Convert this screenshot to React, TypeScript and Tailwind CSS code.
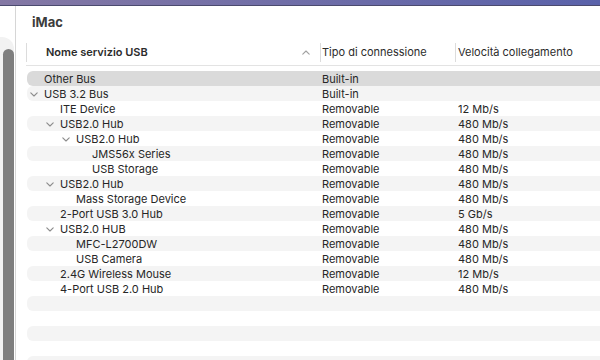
import React from 'react';

type Row = { name: string; level: number; open?: boolean; kind: string; speed: string };

const rows: Row[] = [
  { name: 'Other Bus', level: 0, kind: 'Built-in', speed: '' },
  { name: 'USB 3.2 Bus', level: 0, open: true, kind: 'Built-in', speed: '' },
  { name: 'ITE Device', level: 1, kind: 'Removable', speed: '12 Mb/s' },
  { name: 'USB2.0 Hub', level: 1, open: true, kind: 'Removable', speed: '480 Mb/s' },
  { name: 'USB2.0 Hub', level: 2, open: true, kind: 'Removable', speed: '480 Mb/s' },
  { name: 'JMS56x Series', level: 3, kind: 'Removable', speed: '480 Mb/s' },
  { name: 'USB Storage', level: 3, kind: 'Removable', speed: '480 Mb/s' },
  { name: 'USB2.0 Hub', level: 1, open: true, kind: 'Removable', speed: '480 Mb/s' },
  { name: 'Mass Storage Device', level: 2, kind: 'Removable', speed: '480 Mb/s' },
  { name: '2-Port USB 3.0 Hub', level: 1, kind: 'Removable', speed: '5 Gb/s' },
  { name: 'USB2.0 HUB', level: 1, open: true, kind: 'Removable', speed: '480 Mb/s' },
  { name: 'MFC-L2700DW', level: 2, kind: 'Removable', speed: '480 Mb/s' },
  { name: 'USB Camera', level: 2, kind: 'Removable', speed: '480 Mb/s' },
  { name: '2.4G Wireless Mouse', level: 1, kind: 'Removable', speed: '12 Mb/s' },
  { name: '4-Port USB 2.0 Hub', level: 1, kind: 'Removable', speed: '480 Mb/s' },
];

const Chevron = () => (
  <svg width="8" height="5" viewBox="0 0 8 5" className="shrink-0 mr-[6px]">
    <path d="M0.8 0.8 L4 4 L7.2 0.8" fill="none" stroke="#8c8c8c" strokeWidth="1.1" strokeLinecap="round" strokeLinejoin="round" />
  </svg>
);

const App = () => {
  return (
    <div
      className="w-[600px] h-[360px] overflow-hidden bg-white flex flex-col text-[11px] text-[#262626]"
      style={{ fontFamily: 'Inter, "Liberation Sans", sans-serif' }}
    >
      <div className="h-[6px] shrink-0 bg-gradient-to-r from-[#8478a4] to-[#5a62aa] border-b border-[#4b4a6e]" />
      <div className="flex flex-1 min-h-0">
        {/* sidebar edge with scroller */}
        <div className="w-[16px] shrink-0 flex">
          <div className="w-[14px] mt-[31px] bg-[#f2f2f2] rounded-tr-[12px] pl-[3px] pt-[12px]">
            <div className="w-[11px] h-full bg-[#7f7f7f] rounded-t-[6px]" />
          </div>
          <div className="w-px bg-white" />
          <div className="w-px bg-[#d6d6d6]" />
        </div>

        <div className="flex-1 flex flex-col min-w-0">
          <div className="h-[34px] shrink-0 flex items-center pl-[16px] text-[13px] font-bold text-[#3c3c3c]">iMac</div>

          <div className="ml-[10px]">
            <div className="h-[26px] grid grid-cols-[294px_135px_1fr] items-center border-b border-[#e3e3e3] text-[#2c2c2c]">
              <div className="h-[19px] border-l border-[#dcdcdc] pl-[19px] pr-[10px] flex items-center justify-between">
                <span className="font-semibold">Nome servizio USB</span>
                <svg width="8" height="5" viewBox="0 0 8 5">
                  <path d="M0.8 4.2 L4 1 L7.2 4.2" fill="none" stroke="#a0a0a0" strokeWidth="1.1" strokeLinecap="round" strokeLinejoin="round" />
                </svg>
              </div>
              <div className="h-[19px] border-l border-[#dcdcdc] pl-px flex items-center">Tipo di connessione</div>
              <div className="h-[19px] border-l border-[#dcdcdc] pl-[2px] flex items-center">Velocità collegamento</div>
            </div>

            <div className="pt-[5px] ml-px">
              {rows.map((r, i) => (
                <div
                  key={i}
                  className={`h-[15px] grid grid-cols-[293px_135px_1fr] items-center rounded-l-[6px] ${
                    i === 0 ? 'bg-[#dadada]' : i % 2 === 1 ? 'bg-[#f4f4f4]' : 'bg-white'
                  }`}
                >
                  <div className="flex items-center" style={{ paddingLeft: 3 + r.level * 16 }}>
                    {r.open ? <Chevron /> : <span className="w-[14px] shrink-0" />}
                    <span className="whitespace-nowrap">{r.name}</span>
                  </div>
                  <div className="pl-[2px]">{r.kind}</div>
                  <div className="pl-[3px]">{r.speed}</div>
                </div>
              ))}
              {[0, 1, 2, 3, 4, 5].map(i => (
                <div key={'e' + i} className={`h-[15px] rounded-l-[6px] ${i % 2 === 0 ? 'bg-[#f4f4f4]' : 'bg-white'}`} />
              ))}
            </div>
          </div>
        </div>
      </div>
    </div>
  );
};

export default App;
